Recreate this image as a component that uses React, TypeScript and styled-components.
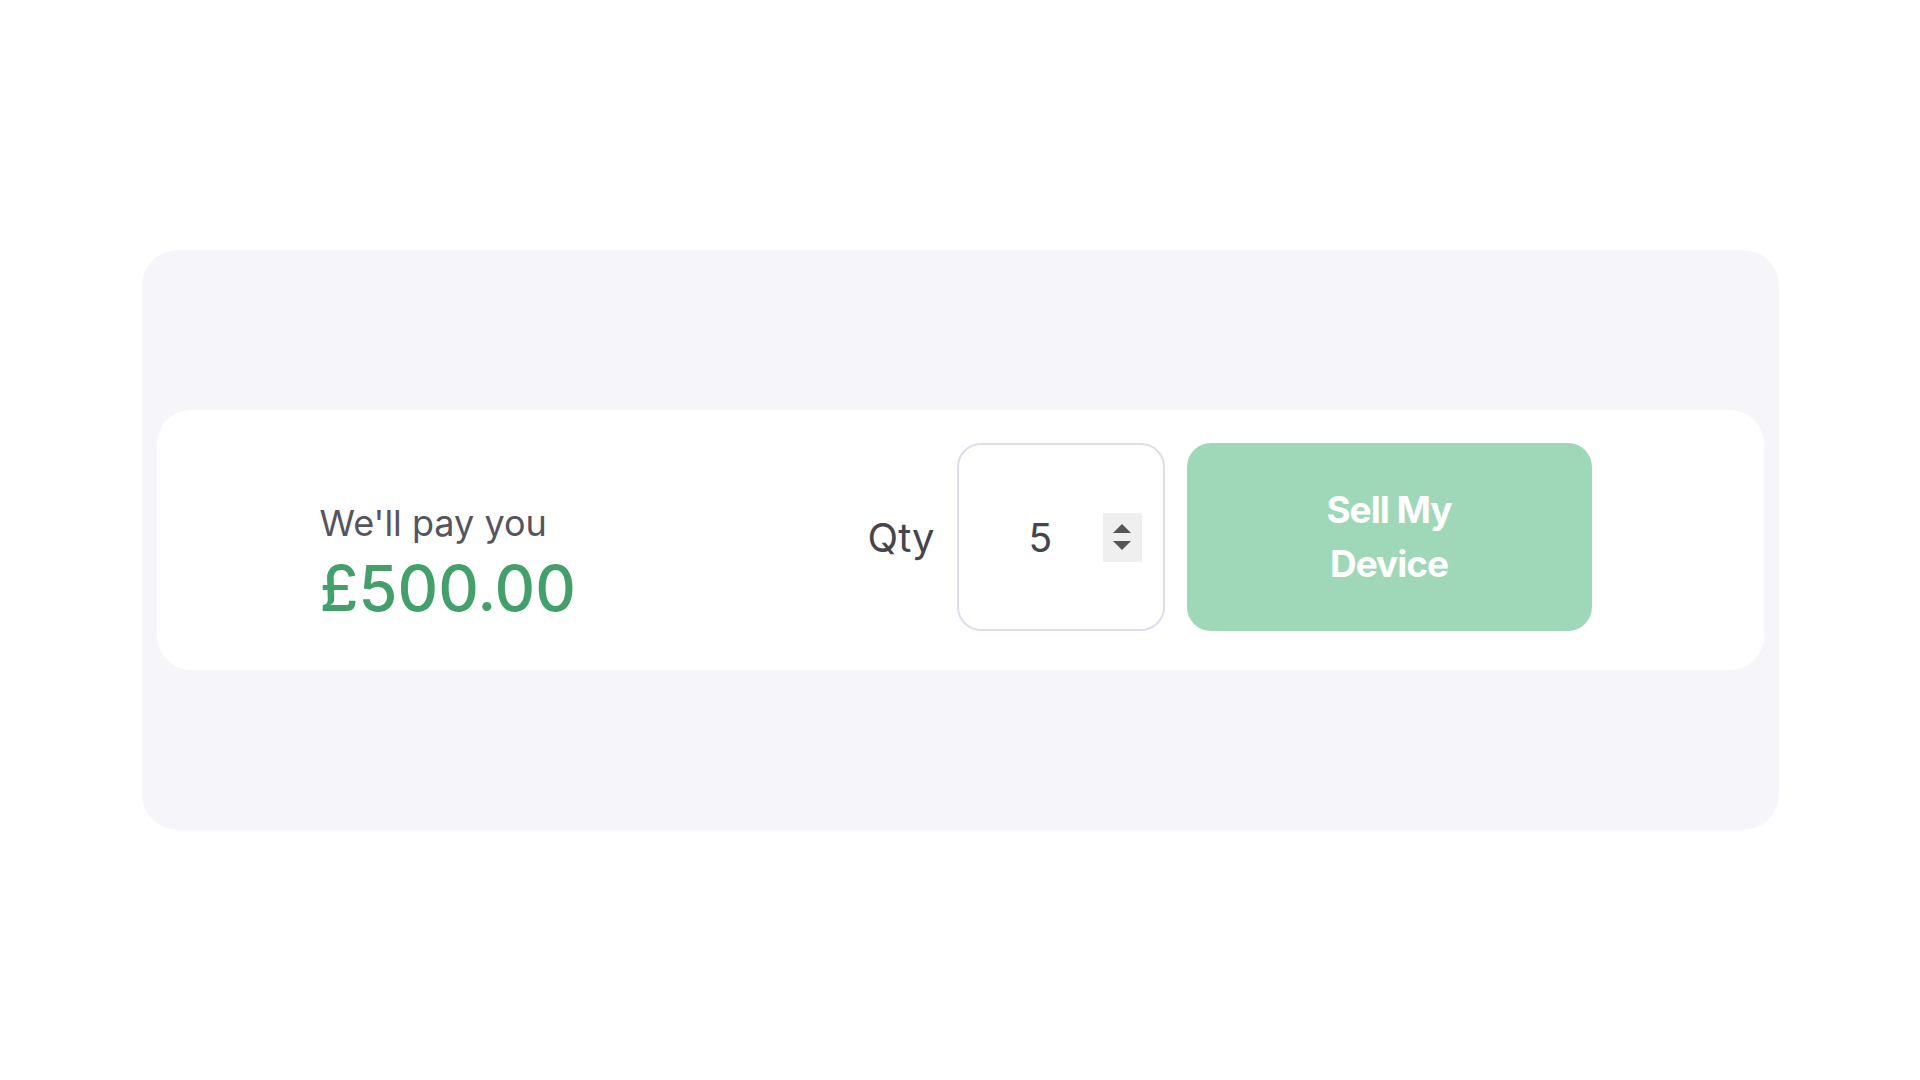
import React from 'react';
import styled, { createGlobalStyle } from 'styled-components';

const GlobalStyle = createGlobalStyle`
    html, body {
        margin: 0;
        padding: 0;
        background: #ffffff;
        font-family: Inter, "Noto Sans", Arial, sans-serif;
    }
`;

const Page = styled.div`
    min-height: 100vh;
    display: flex;
    align-items: center;
    justify-content: center;
`;

const Panel = styled.div`
    width: 1637px;
    box-sizing: border-box;
    padding: 160px 15px;
    background: #f6f6fa;
    border-radius: 36px;
`;

const OfferCard = styled.div`
    height: 260px;
    box-sizing: border-box;
    padding: 33px 172px 39px 163px;
    background: #ffffff;
    border-radius: 34px;
    display: flex;
    align-items: center;
    justify-content: space-between;
`;

const PriceBlock = styled.div`
    display: flex;
    flex-direction: column;
    margin-top: 54px;
`;

const PayLabel = styled.div`
    font-size: 36px;
    line-height: 1.2;
    color: #55555f;
`;

const Price = styled.div`
    font-size: 63px;
    line-height: 1.2;
    margin-top: 6px;
    color: #43a06a;
    font-weight: 450;
`;

const Controls = styled.div`
    display: flex;
    align-items: center;
    height: 188px;
`;

const QtyLabel = styled.span`
    font-size: 40px;
    color: #45454f;
    margin-right: 22px;
`;

const QtyBox = styled.div`
    width: 208px;
    height: 188px;
    box-sizing: border-box;
    border: 2px solid #dedded;
    border-radius: 24px;
    display: flex;
    align-items: center;
    padding: 0 21px 0 70px;
`;

const QtyValue = styled.span`
    font-size: 39px;
    color: #45454f;
`;

const Spinner = styled.div`
    margin-left: auto;
    width: 39px;
    height: 49px;
    background: #efefef;
    display: flex;
    flex-direction: column;
    align-items: center;
    justify-content: center;
    gap: 8px;
`;

const SellButton = styled.button`
    margin-left: 22px;
    width: 405px;
    height: 188px;
    border: none;
    border-radius: 24px;
    background: #9fd8b8;
    color: #ffffff;
    font-family: Inter, "Noto Sans", Arial, sans-serif;
    font-size: 37px;
    font-weight: 700;
    line-height: 54px;
    letter-spacing: -1px;
    padding: 0 110px;
`;

function Arrow (props: { up?: boolean }) {
    return <svg width="18" height="9" viewBox="0 0 18 9">
        {props.up
            ? <polygon points="9,0 18,9 0,9" fill="#555555"/>
            : <polygon points="0,0 18,0 9,9" fill="#555555"/>}
    </svg>
}

function App () {
    return <Page>
        <GlobalStyle/>
        <Panel>
            <OfferCard>
                <PriceBlock>
                    <PayLabel>We'll pay you</PayLabel>
                    <Price>£500.00</Price>
                </PriceBlock>

                <Controls>
                    <QtyLabel>Qty</QtyLabel>
                    <QtyBox>
                        <QtyValue>5</QtyValue>
                        <Spinner>
                            <Arrow up/>
                            <Arrow/>
                        </Spinner>
                    </QtyBox>
                    <SellButton>Sell My Device</SellButton>
                </Controls>
            </OfferCard>
        </Panel>
    </Page>
}

export default App;
